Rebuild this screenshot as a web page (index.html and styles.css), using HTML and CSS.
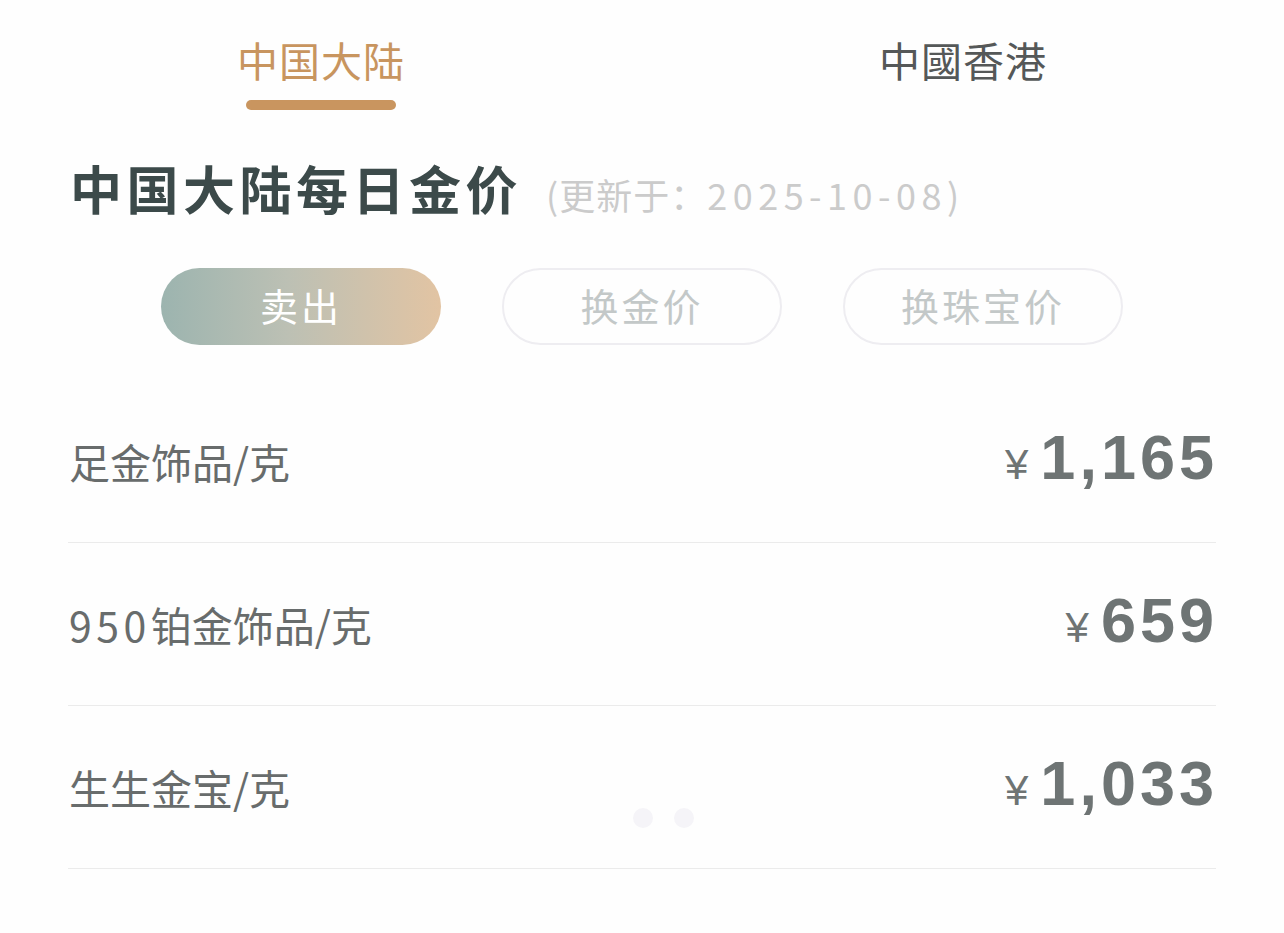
FILE: index.html
```html
<!DOCTYPE html>
<html lang="zh-CN">
<head>
<meta charset="utf-8">
<link rel="stylesheet" href="styles.css">
</head>
<body>
<div class="page">
  <div class="tabs">
    <div class="tab active"><span class="tab-text">中国大陆</span><span class="tab-bar"></span></div>
    <div class="tab"><span class="tab-text">中國香港</span></div>
  </div>
  <div class="title-row">
    <h1 class="title">中国大陆每日金价</h1>
    <span class="updated">(更新于：<span class="date">2025-10-08</span>)</span>
  </div>
  <div class="pills">
    <div class="pill pill-active">卖出</div>
    <div class="pill">换金价</div>
    <div class="pill">换珠宝价</div>
  </div>
  <div class="rows">
    <div class="row"><span class="label">足金饰品/克</span><span class="price"><span class="yen">¥</span><span class="num">1,165</span></span></div>
    <div class="row"><span class="label"><span class="digits">950</span>铂金饰品/克</span><span class="price"><span class="yen">¥</span><span class="num">659</span></span></div>
    <div class="row"><span class="label">生生金宝/克</span><span class="price"><span class="yen">¥</span><span class="num">1,033</span></span></div>
  </div>
  <div class="dots"><span class="dot"></span><span class="dot"></span></div>
</div>
</body>
</html>
```
FILE: styles.css
```css
html, body {
  margin: 0;
  padding: 0;
  background: #ffffff;
}
body {
  font-family: "Noto Sans CJK SC", "Noto Sans", sans-serif;
}
.page {
  position: relative;
  width: 1284px;
  height: 933px;
  overflow: hidden;
  background: #fefefe;
}
.tabs {
  display: grid;
  grid-template-columns: 1fr 1fr;
  padding-top: 30px;
}
.tab {
  display: flex;
  flex-direction: column;
  align-items: center;
}
.tab-text {
  font-size: 41px;
  line-height: 58px;
  color: #555858;
  letter-spacing: 1px;
}
.tab.active .tab-text {
  color: #c8955f;
}
.tab-bar {
  margin-top: 12px;
  width: 150px;
  height: 10px;
  border-radius: 5px;
  background: #c9955f;
}
.title-row {
  display: flex;
  align-items: baseline;
  margin-top: 48px;
  padding-left: 70px;
}
.title {
  margin: 0;
  font-size: 52px;
  line-height: 60px;
  font-weight: 700;
  letter-spacing: 4.5px;
  color: #3c4a4a;
}
.updated {
  margin-left: 24px;
  font-size: 36px;
  color: #cbcbcb;
  letter-spacing: 1px;
}
.date {
  letter-spacing: 5.5px;
}
.pills {
  display: flex;
  justify-content: center;
  gap: 61px;
  margin-top: 48px;
}
.pill {
  box-sizing: border-box;
  width: 280px;
  height: 77px;
  padding-bottom: 5px;
  border-radius: 39px;
  border: 2px solid #eeedf1;
  display: flex;
  align-items: center;
  justify-content: center;
  font-size: 38px;
  color: #c3c8c8;
  letter-spacing: 3px;
}
.pill-active {
  border: none;
  background: linear-gradient(90deg, #9cb4af 0%, #bcc0b4 45%, #e2c4a3 100%);
  color: #ffffff;
}
.rows {
  margin: 35px 68px 0 68px;
}
.row {
  box-sizing: border-box;
  height: 163px;
  padding-top: 46px;
  display: flex;
  align-items: baseline;
  justify-content: space-between;
  border-bottom: 1px solid #ebebeb;
  line-height: 63px;
}
.label {
  padding-left: 1px;
  font-size: 41px;
  color: #686c6c;
}
.digits {
  letter-spacing: 4.5px;
}
.price {
  display: flex;
  align-items: baseline;
  padding-right: 2px;
  color: #6e7474;
}
.yen {
  font-family: "Liberation Sans", sans-serif;
  font-size: 42px;
  margin-right: 12px;
}
.num {
  font-family: "Liberation Sans", sans-serif;
  font-size: 63px;
  font-weight: 700;
  letter-spacing: 4px;
  margin-right: -4px;
}
.dots {
  position: absolute;
  left: 633px;
  top: 808px;
  display: flex;
  gap: 21px;
}
.dot {
  width: 20px;
  height: 20px;
  border-radius: 50%;
  background: #f5f4f8;
}
```
